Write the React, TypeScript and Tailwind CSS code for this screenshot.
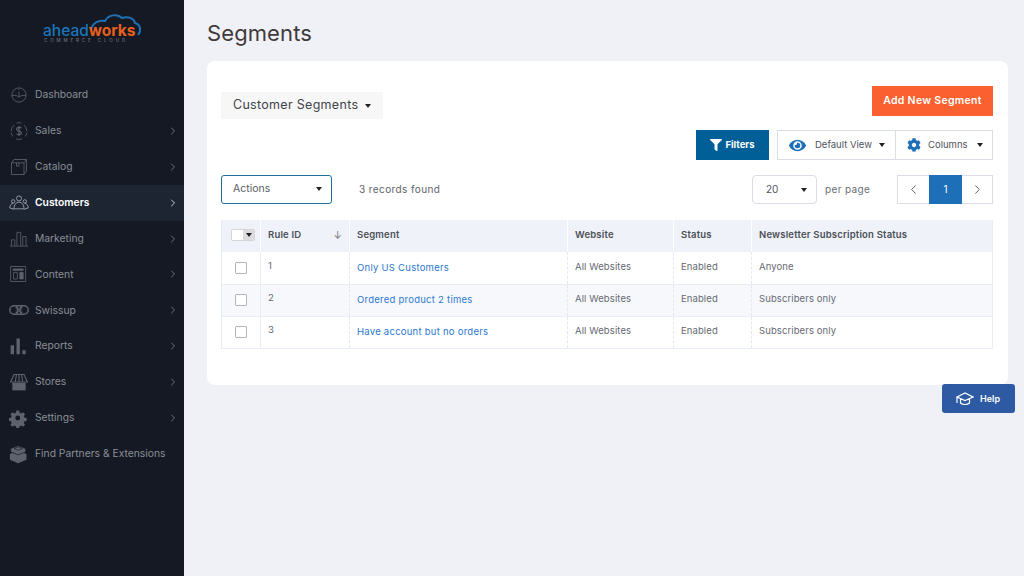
import { ChevronLeft, ChevronRight } from 'lucide-react';
import type { ReactNode } from 'react';
import { FaCog, FaEye, FaFilter } from 'react-icons/fa';

/* ── Sidebar icons ─────────────────────────────────────────────────────────── */
const line = { fill: 'none', stroke: 'currentColor', strokeWidth: 1 };

const ICONS: Record<string, ReactNode> = {
  dashboard: (
    <g {...line}>
      <circle cx="12" cy="12" r="8.500" />
      <path d="M3.500 12.500h5l3.500 2 3.500-2h5M12 8v6M12 4.500v1.500" />
    </g>
  ),
  sales: (
    <g {...line}>
      <path d="M6 5A10 10 0 0 0 4.500 18.500M18 5A10 10 0 0 1 19.500 18.500M8.500 21.500a10 10 0 0 0 7 0M9 2.500a10 10 0 0 1 6 0" strokeDasharray="8 1.500" />
      <path d="M15 8.500c-1-1.300-6-1.500-6 1.300 0 3 6 1.600 6 4.500 0 2.700-5 2.400-6 1M12 6v12" strokeWidth="1.400" />
    </g>
  ),
  catalog: (
    <g {...line}>
      <path d="M3 7h15v14H3zM3 7l3-4h15v14l-3 4M18 7l3-4" />
      <path d="M9 7v4h3V7" />
    </g>
  ),
  customers: (
    <g {...line}>
      <circle cx="12" cy="6.500" r="3" />
      <circle cx="5" cy="10" r="2" />
      <circle cx="19" cy="10" r="2" />
      <path d="M6 19c0-5 2.500-8 6-8s6 3 6 8zM1 18c0-3 1.500-5.500 4-5.500M23 18c0-3-1.500-5.500-4-5.500M1 18l5 1.500M23 18l-5 1.500" />
    </g>
  ),
  marketing: (
    <g {...line}>
      <path d="M1 20.500h22M3 20v-7h4v7M9.500 20V4h4.500v16M16.500 20V9h4v11" />
    </g>
  ),
  content: (
    <g {...line}>
      <path d="M2 3h18v18H2zM5 6.500h12M5.500 10h4.500v8H5.500z" />
      <path d="M5 6h12v1.500H5zM13 10h4v8h-4z" fill="currentColor" />
    </g>
  ),
  swissup: (
    <g {...line} strokeWidth="1.800">
      <rect x="1" y="7" width="22" height="10" rx="5" />
      <path d="M8 8c4 1 4 7 0 8M16 8c-4 1-4 7 0 8" fill="currentColor" fillOpacity="0.35" />
    </g>
  ),
  reports: (
    <path d="M2 11h4v11H2zM9 3h4v19H9zM16 17h4v5h-4z" fill="currentColor" />
  ),
  stores: (
    <g>
      <path d="M4 13h16v9H4z" fill="currentColor" />
      <path d="M6 3h12l4 9H2zM9 3l-1.500 9M12 3v9M15 3l1.500 9" {...line} strokeWidth="1.400" />
    </g>
  ),
  settings: (
    <path
      fillRule="evenodd"
      d="M10 1.500h4l.6 3 2.300 1 2.600-1.700 2.800 2.800-1.700 2.600 1 2.300 3 .6v4l-3 .6-1 2.300 1.700 2.600-2.800 2.800-2.600-1.700-2.300 1-.6 3h-4l-.6-3-2.300-1-2.600 1.700-2.800-2.800 1.700-2.600-1-2.300-3-.6v-4l3-.6 1-2.300-1.700-2.600 2.800-2.800 2.600 1.700 2.300-1zM12 8.500a3.500 3.500 0 1 0 0 7 3.500 3.500 0 0 0 0-7z"
      fill="currentColor"
      transform="translate(.3 1.800) scale(.85)"
    />
  ),
  partners: (
    <g>
      <path d="M11 8l10 4v7l-10 4-10-4v-7z" fill="currentColor" />
      <path d="M11 2l9 3.500v4L11 13 2 9.500v-4z" fill="currentColor" stroke="#141923" strokeWidth="0.800" />
      <path d="M6 5.500l5-2 5 2-5 2z" fill="none" stroke="#141923" strokeWidth="0.700" />
    </g>
  ),
};

const MENU = [
  { key: 'dashboard', label: 'Dashboard', arrow: false },
  { key: 'sales', label: 'Sales', arrow: true },
  { key: 'catalog', label: 'Catalog', arrow: true },
  { key: 'customers', label: 'Customers', arrow: true, active: true },
  { key: 'marketing', label: 'Marketing', arrow: true },
  { key: 'content', label: 'Content', arrow: true },
  { key: 'swissup', label: 'Swissup', arrow: true },
  { key: 'reports', label: 'Reports', arrow: true },
  { key: 'stores', label: 'Stores', arrow: true },
  { key: 'settings', label: 'Settings', arrow: true },
  { key: 'partners', label: 'Find Partners & Extensions', arrow: false },
];

const ROWS = [
  { id: 1, name: 'Only US Customers', sub: 'Anyone' },
  { id: 2, name: 'Ordered product 2 times', sub: 'Subscribers only' },
  { id: 3, name: 'Have account but no orders', sub: 'Subscribers only' },
];

function Caret({ className = '' }: { className?: string }) {
  return (
    <span
      className={`inline-block w-0 h-0 border-x-[3.500px] border-x-transparent border-t-[4px] border-t-[#222] ${className}`}
    />
  );
}

function Sidebar() {
  return (
    <aside className="w-[184px] shrink-0 bg-[#141923] flex flex-col">
      {/* Logo */}
      <div className="h-[77px] relative">
        <svg width="56" height="24" viewBox="0 0 56 24" className="absolute left-[87px] top-[12px]">
          <path
            d="M4 17C7 9 14 8 18 9 21 3 30 1 35 6 41 4 47 6 48 11 53 12 55 18 51 23"
            fill="none"
            stroke="#1f6fb5"
            strokeWidth="2"
          />
        </svg>
        <p className="absolute left-[43px] top-[23px] text-[15.500px] leading-[16px] font-['Inter',sans-serif]">
          <span className="text-[#1b75bb] font-medium">ahead</span>
          <span className="text-[#e8601c] font-bold">works</span>
        </p>
        <p className="absolute left-[44px] top-[39px] text-[4.500px] leading-[4px] tracking-[2.900px] text-[#7b808a] whitespace-nowrap font-['Inter',sans-serif]">
          COMMERCE CLOUD
        </p>
      </div>

      <nav className="flex flex-col">
        {MENU.map((item) => (
          <div
            key={item.key}
            className={`h-[35.900px] flex items-center pl-[9px] pr-[5px] ${
              item.active ? 'bg-[#1e2532] text-white font-semibold' : 'text-[#8b8f98]'
            }`}
          >
            <svg
              viewBox="0 0 24 24"
              width="20"
              height="20"
              className={`shrink-0 ${item.active ? 'text-[#a6abb4]' : 'text-[#5d626c]'}`}
            >
              {ICONS[item.key]}
            </svg>
            <span className="ml-[6px] flex-1 whitespace-nowrap text-[10.300px]">{item.label}</span>
            {item.arrow && (
              <ChevronRight
                size={12}
                strokeWidth={1.500}
                className={item.active ? 'text-white' : 'text-[#8a8e96]'}
              />
            )}
          </div>
        ))}
      </nav>
    </aside>
  );
}

function Toolbar() {
  return (
    <>
      <div className="flex items-start justify-between">
        <div className="mt-[6px] h-[27px] w-[162px] bg-[#f7f7f7] flex items-center pl-[12px] text-[#41444b] text-[12.500px] tracking-[0.300px] whitespace-nowrap">
          Customer Segments
          <Caret className="ml-[7px]" />
        </div>
        <button className="h-[30px] w-[121px] bg-[#fb6130] text-white text-[10.500px] font-semibold tracking-[0.300px] whitespace-nowrap">
          Add New Segment
        </button>
      </div>

      <div className="mt-[11px] flex justify-end">
        <button className="h-[30px] w-[73px] bg-[#005f96] text-white text-[9.500px] font-bold flex items-center justify-center gap-[3px]">
          <FaFilter size={12} />
          Filters
        </button>
        <div className="ml-[8px] h-[30px] w-[119px] border border-[#d9dde6] flex items-center pl-[11px] text-[#50545c] text-[9.500px] whitespace-nowrap">
          <FaEye size={17} className="text-[#1d70b8]" />
          <span className="ml-[9px]">Default View</span>
          <Caret className="ml-[7px]" />
        </div>
        <div className="h-[30px] w-[97px] border border-l-0 border-[#d9dde6] flex items-center pl-[11px] text-[#50545c] text-[9.500px] whitespace-nowrap">
          <FaCog size={14} className="text-[#1d70b8]" />
          <span className="ml-[7px]">Columns</span>
          <Caret className="ml-[9px]" />
        </div>
      </div>

      <div className="mt-[14px] flex items-center">
        <div className="h-[29px] w-[111px] border border-[#1f6f99] rounded-[3px] flex items-center justify-between pl-[11px] pr-[9px] text-[#5a5e66] text-[10.500px]">
          Actions
          <Caret />
        </div>
        <span className="ml-[27px] text-[#5f636b] text-[10px] tracking-[0.400px]">3 records found</span>
        <div className="ml-auto mt-[1px] h-[29px] w-[65px] border border-[#d9dde6] rounded-[4px] flex items-center justify-between pl-[13px] pr-[9px] text-[#50545c] text-[10px]">
          20
          <Caret />
        </div>
        <span className="ml-[8px] w-[46px] text-[#6a6e76] text-[10px] tracking-[0.350px] whitespace-nowrap">per page</span>
        <div className="ml-[26px] mt-[1px] h-[29px] w-[96px] border border-[#d9dde6] flex">
          <div className="w-[31px] flex items-center justify-center text-[#50545c]">
            <ChevronLeft size={15} strokeWidth={1.500} />
          </div>
          <div className="w-[33px] -my-[1px] bg-[#1d70b8] text-white text-[10px] flex items-center justify-center">1</div>
          <div className="w-[30px] flex items-center justify-center text-[#50545c]">
            <ChevronRight size={15} strokeWidth={1.500} />
          </div>
        </div>
      </div>
    </>
  );
}

const thClass = 'font-semibold text-left text-[9.500px] text-[#4b4f57] pl-[7px] pb-[2px] border-l border-white first:border-l-0 tracking-[0.200px]';
const tdClass = 'pl-[7px] text-[9.500px] text-[#666a72] border-l border-dashed border-[#e3e8f2] tracking-[0.100px] align-middle';

function SegmentTable() {
  return (
    <table className="mt-[16px] w-[772px] table-fixed border-collapse border-x border-[#e9edf5]">
      <colgroup>
        <col className="w-[39px]" />
        <col className="w-[89px]" />
        <col className="w-[218px]" />
        <col className="w-[106px]" />
        <col className="w-[78px]" />
        <col />
      </colgroup>
      <thead>
        <tr className="h-[32px] bg-[#eff2f8]">
          <th className={thClass}>
            <div className="ml-[2px] flex w-[24px] h-[12px] rounded-[2px] border border-[#d5d5d5]">
              <span className="w-[11px] bg-white" />
              <span className="flex-1 bg-[#dcdcdc] flex items-center justify-center">
                <Caret />
              </span>
            </div>
          </th>
          <th className={thClass}>
            <div className="flex items-center justify-between pr-[7px]">
              Rule ID
              <span className="text-[#777] font-normal text-[10px] leading-none">↓</span>
            </div>
          </th>
          <th className={thClass}>Segment</th>
          <th className={thClass}>Website</th>
          <th className={thClass}>Status</th>
          <th className={thClass}>Newsletter Subscription Status</th>
        </tr>
      </thead>
      <tbody>
        {ROWS.map((row, i) => (
          <tr key={row.id} className={`h-[32px] border-b border-[#e9edf5] ${i === 1 ? 'bg-[#f7f8fc]' : 'bg-white'}`}>
            <td className="border-r border-[#e9edf5] align-middle">
              <span className="block mx-auto w-[12px] h-[12px] bg-white border border-[#b5b5b5] rounded-[1px]" />
            </td>
            <td className={`${tdClass} border-l-0 pb-[4px]`}>{row.id}</td>
            <td className={`${tdClass} !text-[#2b78d0] tracking-[0.250px]`}>{row.name}</td>
            <td className={`${tdClass} pb-[2px]`}>All Websites</td>
            <td className={`${tdClass} pb-[2px]`}>Enabled</td>
            <td className={`${tdClass} pb-[2px]`}>{row.sub}</td>
          </tr>
        ))}
      </tbody>
    </table>
  );
}

export default function App() {
  return (
    <div className="relative w-[1024px] h-[576px] overflow-hidden flex bg-[#f0f1f6] font-['Inter','Liberation_Sans',sans-serif]">
      <Sidebar />
      <main className="flex-1 pl-[23px] pr-[16px]">
        <h1 className="h-[61px] pt-[18px] text-[22px] leading-[30px] text-[#3f3a3a] tracking-[0.100px]">Segments</h1>
        <section className="h-[324px] bg-white rounded-[8px] pl-[14px] pr-[15px] pt-[25px]">
          <Toolbar />
          <SegmentTable />
        </section>
      </main>
      <button className="absolute left-[942px] top-[384px] w-[73px] h-[29px] rounded-[3px] bg-[#2d5aa3] text-white text-[9px] font-semibold flex items-center pl-[14px] gap-[6px]">
        <svg width="18" height="14" viewBox="0 0 18 14" fill="none" stroke="white" strokeWidth="1.200">
          <path d="M1 5l8-4 8 4-8 3.500zM4.500 7v4c2 2 7 2 9 0V7M1 5v6" />
        </svg>
        Help
      </button>
    </div>
  );
}
